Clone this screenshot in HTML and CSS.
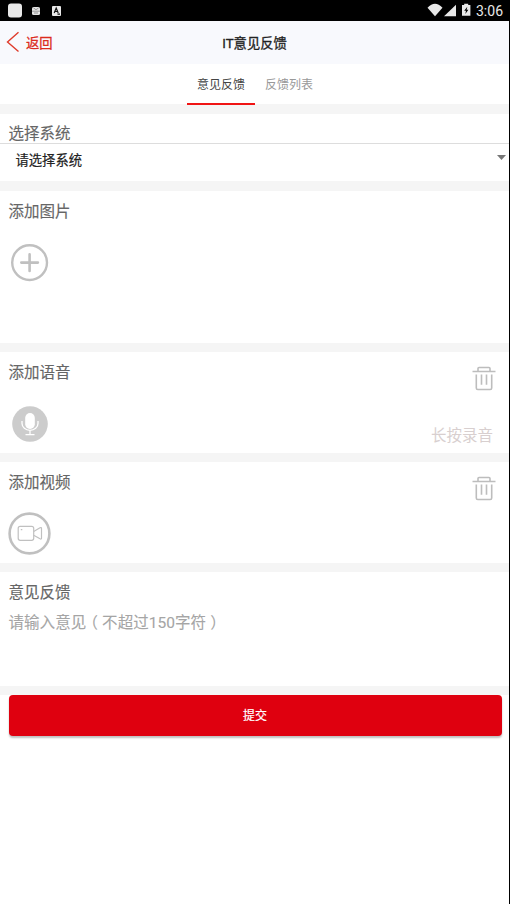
FILE: index.html
```html
<!DOCTYPE html>
<html lang="zh-CN">
<head>
<meta charset="utf-8">
<title>IT意见反馈</title>
<link rel="stylesheet" href="styles.css">
</head>
<body>
<div class="screen">
  <div class="status">
    <svg class="status-left" width="70" height="21" viewBox="0 0 70 21">
      <rect x="8" y="3.500" width="14" height="14" rx="3" fill="#e8e8e8"/>
      <rect x="32" y="7" width="8" height="8" rx="1.500" fill="#e4e4e4"/>
      <path d="M33.500 8l2.500 1.700L38.500 8M32 11.200h8M34 13h4" fill="none" stroke="#777" stroke-width=".7"/>
      <rect x="52" y="6" width="9" height="10" rx="1" fill="#e8e8e8"/>
      <path d="M54.200 13l2-5 2 5M55 11.500h2.500M57.500 14.200h2.500" fill="none" stroke="#111" stroke-width="1.200"/>
    </svg>
    <svg class="status-right" width="46" height="21" viewBox="0 0 46 21">
      <path d="M0.500 7Q8-1.500 15.500 7L8 16.300z" transform="translate(0 1.200) scale(1 .92)" fill="#e8e8e8"/>
      <path d="M17 16.300L29 4.800V16.300z" fill="#e8e8e8"/>
      <path d="M35 5h2.200V3.800h4V5h2.200v10.800H35z" fill="#e8e8e8"/>
      <path d="M40.300 6.800L37.200 10.800h1.800L38.300 14l3.100-4.200h-1.800z" fill="#000"/>
    </svg>
    <span class="clock">3:06</span>
  </div>
  <header class="header">
    <a class="back">
      <svg width="14" height="22" viewBox="0 0 14 22"><path d="M12.500 1.200L1.500 11l11 9.500" fill="none" stroke="#df3c2c" stroke-width="1.400"/></svg>
      <span>返回</span>
    </a>
    <h1>IT意见反馈</h1>
  </header>
  <nav class="tabs">
    <a class="tab active">意见反馈</a>
    <a class="tab">反馈列表</a>
  </nav>
  <section class="system">
    <h2>选择系统</h2>
    <div class="select"><span>请选择系统</span><i class="caret"></i></div>
  </section>
  <section class="images">
    <h2>添加图片</h2>
    <svg class="plus" width="38" height="38" viewBox="0 0 38 38" fill="none" stroke="#c0c0c0" stroke-linecap="round">
      <circle cx="18.600" cy="18.600" r="17.400" stroke-width="2.400"/><path d="M18.600 10.400v16.600M10.300 18.600h16.600" stroke-width="2.600"/>
    </svg>
  </section>
  <section class="voice">
    <div class="line"><h2>添加语音</h2>
      <svg class="trash" width="24" height="25" viewBox="0 0 24 25" fill="none" stroke="#bdbdbd" stroke-width="1.600"><path d="M.5 5.500h23M6 5V2.500q0-1 1-1h10q1 0 1 1V5M4.300 8.500V22q0 1.500 1.500 1.500h12.400q1.500 0 1.500-1.500V8.500M9.500 8.500v10.300M14.500 8.500v10.300"/></svg>
    </div>
    <div class="line record">
      <svg width="36" height="36" viewBox="0 0 36 36"><circle cx="18" cy="18" r="17.800" fill="#ccc"/><rect x="13.200" y="7" width="9.600" height="16" rx="4.800" fill="#fff"/><path d="M10 15v2.500a8 6.800 0 0 0 16 0V15M18 24.500v4M13.500 28.600h9" fill="none" stroke="#fff" stroke-width="1.300"/></svg>
      <span class="hint">长按录音</span>
    </div>
  </section>
  <section class="video">
    <div class="line"><h2>添加视频</h2>
      <svg class="trash" width="24" height="25" viewBox="0 0 24 25" fill="none" stroke="#bdbdbd" stroke-width="1.600"><path d="M.5 5.500h23M6 5V2.500q0-1 1-1h10q1 0 1 1V5M4.300 8.500V22q0 1.500 1.500 1.500h12.400q1.500 0 1.500-1.500V8.500M9.500 8.500v10.300M14.500 8.500v10.300"/></svg>
    </div>
    <svg class="camera" width="43" height="43" viewBox="0 0 43 43" fill="none" stroke="#c0c0c0"><circle cx="21.500" cy="21.500" r="19.900" stroke-width="2.600"/><g stroke-width="1.200"><rect x="10.200" y="14.300" width="15.500" height="14" rx="2"/><path d="M25.700 19.500L32 15.800q1.500-.7 1.500.6v9.800q0 1.300-1.500.6L25.700 23.200M12.800 17.700h1.500"/></g></svg>
  </section>
  <section class="feedback">
    <h2>意见反馈</h2>
    <p>请输入意见<span class="paren">（</span>不超过150字符<span class="paren">）</span></p>
  </section>
  <div class="footer"><button class="submit">提交</button></div>
</div>
</body>
</html>
```
FILE: styles.css
```css
* { box-sizing: border-box; }
body { margin: 0; background: #fff; font-family: Roboto, "Noto Sans CJK SC", sans-serif; }
.screen { height: 904px; border-right: 1px solid #000; background: #fff; overflow: hidden; }
.status { display: flex; height: 21px; background: #000; }
.status svg { display: block; flex: none; }
.status-right { margin-left: auto; }
.clock { width: 36px; padding-left: 3px; color: #e8e8e8; font-size: 14px; line-height: 22px; white-space: nowrap; }
.header { display: grid; grid-template-columns: 1fr auto 1fr; align-items: center; height: 43px; background: #f8f9fd; }
.back { display: flex; align-items: center; gap: 6px; padding-left: 6px; color: #dc2c1e; font-size: 13.300px; line-height: 20px; -webkit-text-stroke: .3px; }
.back svg { display: block; margin-top: -2px; }
.back span { padding-top: 2px; }
h1 { margin: 0; padding-top: 2px; font-size: 13.300px; line-height: 20px; font-weight: 400; color: #222; -webkit-text-stroke: .3px; }
.tabs { display: flex; justify-content: center; height: 40px; padding-left: 1px; }
.tab { width: 68px; height: 41px; padding-top: 1px; text-align: center; font-size: 12px; line-height: 40px; color: #999; }
.tab.active { color: #444; border-bottom: 2px solid #f01414; z-index: 1; }
section { border-top: 9px solid #f5f5f5; overflow: hidden; }
h2 { margin: 0; padding-left: 8.500px; font-size: 15.500px; line-height: 20px; font-weight: 400; color: #666; -webkit-text-stroke: .15px; }
.system { height: 77px; border-top-width: 10px; }
.system h2 { height: 30px; padding-top: 10px; border-bottom: 1px solid #ddd; }
.select { display: flex; justify-content: space-between; height: 37px; padding: 7px 3px 0 15.500px; font-size: 13.300px; line-height: 20px; color: #222; -webkit-text-stroke: .2px; }
.caret { margin-top: 4px; width: 9px; height: 5px; background: #777; clip-path: polygon(0 0, 100% 0, 50% 100%); }
.images { height: 162px; border-top-width: 10px; }
.images h2 { padding-top: 11px; }
.plus { display: block; margin: 22px 0 0 11px; }
.voice { height: 110px; }
.line { display: flex; justify-content: space-between; }
.line h2 { padding-top: 11px; }
.line svg { display: block; flex: none; }
.trash { margin: 14px 13px 0 0; }
.record { margin-top: 15px; padding: 0 16px 0 12px; }
.hint { padding-top: 20px; color: #d8cfcf; font-size: 15.500px; line-height: 20px; }
.video { height: 110px; }
.camera { display: block; margin: 11px 0 0 8px; }
.feedback { height: 123px; }
.feedback h2 { padding-top: 11px; }
.feedback p { margin: 10px 0 0 8.500px; font-size: 15.500px; line-height: 20px; color: #a5a5a5; letter-spacing: .05px; -webkit-text-stroke: .1px; }
.paren { padding: 0 4px; font-feature-settings: "halt"; }
.footer { padding: 0 7.500px 0 8.500px; border-top: 9px solid #f5f5f5; }
.submit { display: block; width: 100%; height: 41px; padding: 1px 0 0; border: 0; border-radius: 4px; background: #df000f; box-shadow: 0 2px 2px rgba(0,0,0,.25); color: #fff; font: 400 12px/40px Roboto, "Noto Sans CJK SC", sans-serif; -webkit-text-stroke: .2px; }
```
